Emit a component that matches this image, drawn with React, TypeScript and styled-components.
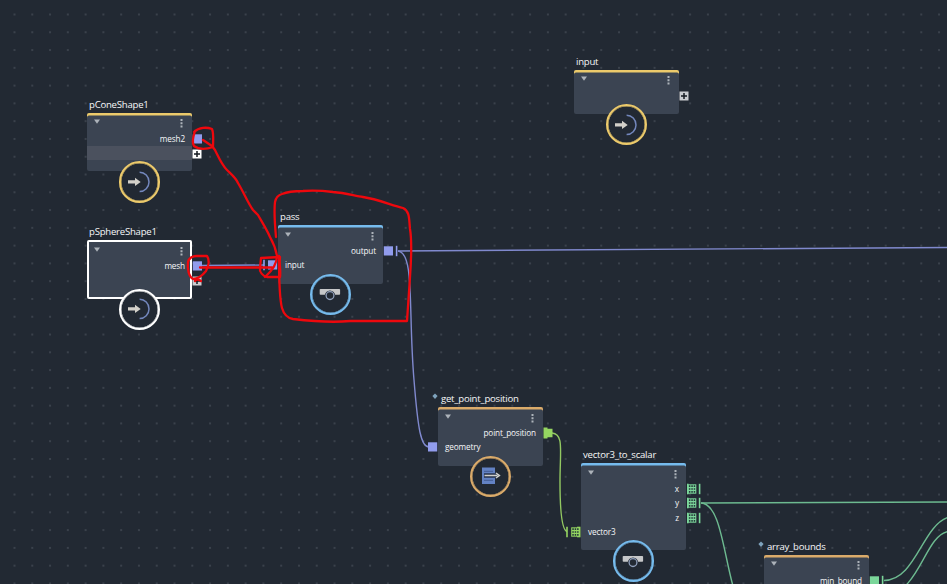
import React from "react";
import styled, { createGlobalStyle } from "styled-components";

const GlobalStyle = createGlobalStyle`
  * { box-sizing: border-box; }
  body { margin: 0; background: #222933; overflow: hidden; }
`;

const PITCH = 17.78;

const Canvas = styled.main`
  position: relative;
  width: 947px;
  height: 584px;
  overflow: hidden;
  background: #222933;
  font-family: "Open Sans", "Noto Sans", sans-serif;
  color: #f6f7f8;
`;

const Layer = styled.svg`
  position: absolute;
  inset: 0;
  width: 947px;
  height: 584px;
  fill: none;
  pointer-events: none;
`;

const NodeBox = styled.section<{ $x: number; $y: number }>`
  position: absolute;
  left: ${(p) => p.$x}px;
  top: ${(p) => p.$y - 16}px;
  width: 105px;
  display: flex;
  flex-direction: column;
`;

const Title = styled.h2<{ $shift: number }>`
  position: relative;
  margin: 0;
  height: 16px;
  padding-left: ${(p) => p.$shift}px;
  font-size: 9.6px;
  font-weight: 400;
  line-height: 16px;
  letter-spacing: -0.24px;
  white-space: nowrap;
`;

const Marker = styled.svg`
  position: absolute;
  left: -6px;
  top: 2px;
  width: 6px;
  height: 8px;
`;

const Card = styled.div<{ $accent: string; $selected?: boolean }>`
  position: relative;
  display: flex;
  flex-direction: column;
  padding-bottom: 11px;
  border-radius: 2px;
  background: #3b4452;
  box-shadow: ${(p) => (p.$selected ? "inset 0 0 0 2px #ffffff" : `inset 0 2.5px 0 ${p.$accent}`)};
`;

const CardHeader = styled.div`
  display: flex;
  justify-content: space-between;
  height: 19px;
  padding: 6.5px 9px 0 7px;
`;

const Row = styled.div<{ $out?: boolean; $band?: boolean }>`
  position: relative;
  display: flex;
  align-items: center;
  justify-content: ${(p) => (p.$out ? "flex-end" : "flex-start")};
  height: 14.3px;
  padding: 0 7px;
  background: ${(p) => (p.$band ? "#4b515e" : "transparent")};
`;

const Label = styled.span`
  font-size: 8.2px;
  line-height: 14px;
  letter-spacing: -0.13px;
  white-space: nowrap;
`;

const Socket = styled.svg<{ $out?: boolean }>`
  position: absolute;
  top: 1px;
  ${(p) => (p.$out ? "left: 105px;" : "right: 105px;")}
  width: 18px;
  height: 12px;
  overflow: visible;
`;

const PlusBox = styled.svg<{ $y: number }>`
  position: absolute;
  left: 105px;
  top: ${(p) => p.$y}px;
  width: 10px;
  height: 10px;
`;

const Badge = styled.div<{ $accent: string }>`
  position: absolute;
  left: 31.5px;
  bottom: -31.5px;
  width: 41.5px;
  height: 41.5px;
  display: flex;
  align-items: center;
  justify-content: center;
  border: 2px solid ${(p) => p.$accent};
  box-shadow: inset 0 0 0 0.5px ${(p) => p.$accent};
  border-radius: 50%;
  background: #222933;
`;

type Kind = "import" | "pass" | "compute";
type SocketKind = "square" | "squareTick" | "gridTick" | "tab";

interface PortDef {
  label: string;
  out?: boolean;
  band?: boolean;
  socket?: SocketKind;
  color?: string;
}

interface NodeDef {
  title: string;
  x: number;
  y: number;
  accent: string;
  kind: Kind;
  ports: PortDef[];
  shift?: number;
  marker?: boolean;
  selected?: boolean;
  plus?: { y: number; fill: string };
}

function SocketIcon({ kind, color, out }: { kind: SocketKind; color: string; out?: boolean }) {
  return (
    <Socket $out={out} viewBox="0 0 18 12">
      {(kind === "square" || kind === "squareTick") && (
        <rect x={out ? 0.8 : 8} y="1.3" width="9.2" height="9.2" fill={color} />
      )}
      {kind === "tab" && <path d="M0.5 0.5h4v1.2h5v8.6h-5v1.2h-4z" fill={color} />}
      {kind === "gridTick" && (
        <g transform={out ? "translate(1 0)" : "translate(17.5 0) scale(-1 1)"}>
          <rect x="0" y="0.7" width={out ? 1.6 : 3.4} height="10.6" fill={color} />
          <rect x="0.5" y="1.3" width="8.8" height="9.4" fill={color} />
          <path
            d="M1.9 3.200h1.500M4.300 3.200h1.500M6.700 3.200h1.500M1.900 6h1.500M4.300 6h1.500M6.700 6h1.500M1.900 8.800h1.500M4.300 8.800h1.500M6.700 8.800h1.500"
            stroke="#24393a"
            strokeWidth="1.700"
          />
        </g>
      )}
      {(kind === "squareTick" || kind === "gridTick") && (
        <path d={out ? "M13.6 0.8v10.4" : "M4 0.8v10.4"} stroke={color} strokeWidth="1.6" />
      )}
    </Socket>
  );
}

function KindIcon({ kind }: { kind: Kind }) {
  if (kind === "import")
    return (
      <svg width="36" height="36" viewBox="0 0 36 36" fill="none">
        <path d="M7 16.200h7v-2.400l5.700 4.100-5.700 4.100v-2.400H7z" fill="#d3d0c9" />
        <path d="M18.600 8.200a9.400 9.700 0 0 1 0 19.400" stroke="#7387bd" strokeWidth="1.500" />
      </svg>
    );
  if (kind === "pass")
    return (
      <svg width="36" height="36" viewBox="0 0 36 36" fill="none">
        <rect x="7.700" y="13" width="20.400" height="5.800" rx="0.800" fill="#c6c7c9" />
        <circle cx="18" cy="19.600" r="5.200" fill="#222933" />
        <circle cx="18" cy="19.600" r="3.900" fill="#222933" stroke="#8f9fbb" strokeWidth="1.300" />
      </svg>
    );
  return (
    <svg width="36" height="36" viewBox="0 0 36 36" fill="none">
      <path d="M10 9.500h13v16.500H10z" fill="#6382c4" />
      <path d="M12 13.300h9M12 22.300h9" stroke="#435c93" strokeWidth="1" />
      <path d="M12 15.200h11v-1.800l5 4.200-5 4.200v-2h-11z" fill="#27334c" />
      <path d="M12.500 17.500h13M24 15l3.400 2.500-3.400 2.500" stroke="#d0d0cc" strokeWidth="1.500" />
    </svg>
  );
}

const YELLOW = "#ecca6b";
const BLUE = "#76bbed";
const TAN = "#dbab6a";
const MESH = "#919ced";
const LIME = "#95d561";
const GREEN = "#7bd69a";

const nodes: NodeDef[] = [
  {
    title: "pConeShape1", x: 87, y: 112.500, accent: YELLOW, kind: "import",
    plus: { y: 36, fill: "#ffffff" },
    ports: [{ label: "mesh2", out: true, socket: "square", color: MESH }, { label: "", band: true }],
  },
  {
    title: "pSphereShape1", x: 87, y: 240, accent: "#ffffff", kind: "import", selected: true,
    plus: { y: 36, fill: "#c9ccd0" },
    ports: [{ label: "mesh", out: true, socket: "square", color: MESH }, { label: "" }],
  },
  {
    title: "pass", x: 278, y: 225, accent: BLUE, kind: "pass",
    ports: [
      { label: "output", out: true, socket: "squareTick", color: MESH },
      { label: "input", socket: "squareTick", color: MESH },
    ],
  },
  {
    title: "input", x: 574, y: 69.500, accent: YELLOW, kind: "import",
    plus: { y: 21.500, fill: "#c9ccd0" }, ports: [{ label: "" }],
  },
  {
    title: "get_point_position", x: 438, y: 407, accent: TAN, kind: "compute", marker: true, shift: 3,
    ports: [
      { label: "point_position", out: true, socket: "tab", color: LIME },
      { label: "geometry", socket: "square", color: MESH },
    ],
  },
  {
    title: "vector3_to_scalar", x: 581, y: 463, accent: BLUE, kind: "pass",
    ports: [
      { label: "x", out: true, socket: "gridTick", color: GREEN },
      { label: "y", out: true, socket: "gridTick", color: GREEN },
      { label: "z", out: true, socket: "gridTick", color: GREEN },
      { label: "vector3", socket: "gridTick", color: LIME },
    ],
  },
  {
    title: "array_bounds", x: 764, y: 554.500, accent: TAN, kind: "compute", marker: true, shift: 3,
    ports: [
      { label: "min_bound", out: true, socket: "squareTick", color: GREEN },
      { label: "" },
    ],
  },
];

function GraphNode({ node }: { node: NodeDef }) {
  return (
    <NodeBox $x={node.x} $y={node.y}>
      <Title $shift={node.shift ?? 2}>
        {node.marker && (
          <Marker viewBox="0 0 6 8">
            <path d="M3 0.500L5.600 3 3 6 0.400 3z" fill="#7ea3bd" />
          </Marker>
        )}
        {node.title}
      </Title>
      <Card $accent={node.accent} $selected={node.selected}>
        <CardHeader>
          <svg width="6" height="5" viewBox="0 0 6 5"><path d="M0 0.500h6L3 4.800z" fill="#adb3ba" /></svg>
          <svg width="3" height="9" viewBox="0 0 3 9">
            <path d="M0.500 0h2v2h-2zM0.500 3.300h2v2h-2zM0.500 6.600h2v2h-2z" fill="#adb3ba" />
          </svg>
        </CardHeader>
        {node.ports.map((p, i) => (
          <Row key={i} $out={p.out} $band={p.band}>
            <Label>{p.label}</Label>
            {p.socket && <SocketIcon kind={p.socket} color={p.color ?? MESH} out={p.out} />}
          </Row>
        ))}
        {node.plus && (
          <PlusBox $y={node.plus.y} viewBox="0 0 10 10">
            <rect x="0.500" y="0.500" width="9" height="9" fill={node.plus.fill} />
            <path d="M5 2v6M2 5h6" stroke="#151a21" strokeWidth="1.500" />
          </PlusBox>
        )}
        <Badge $accent={node.accent}><KindIcon kind={node.kind} /></Badge>
      </Card>
    </NodeBox>
  );
}

const wires = [
  { d: "M398 251L947 247.500", c: "#8089ce" },
  { d: "M398 251C415 253 408 310 414 380C418 430 421 447 429 447", c: "#8089ce" },
  { d: "M202 265.500L264 265", c: "#8089ce" },
  { d: "M552 433C564 434 560 450 560 482C560 513 562 530 567 531.500", c: "#93c962" },
  { d: "M701 503L947 502", c: "#6dba90" },
  { d: "M701 503C720 504 723 550 733 586", c: "#6dba90" },
  { d: "M884 580.500C916 580 922 526 948 517.500", c: "#6dba90" },
  { d: "M884 595C920 594 924 536 948 531.500", c: "#6dba90" },
];

const strokes = [
  "M195 131C193 137 192 143 194 146C198 149 204 150 213 147C213 141 214 134 212 129C207 127 199 127 194 132",
  "M203 140L212 146L215 150C219 158 222 165 227 170C231 174 236 178 238 183C244 193 248 203 253 210L258 215C262 222 267 230 270 237C274 244 276 250 277 256C277 263 273 270 265 277",
  "M276 237C275 226 274 210 275 202C276 197 278 195 282 194C289 191 296 191 303 191C316 190 325 191 333 192C346 193 355 196 363 197C377 199 391 205 403 208C410 211 409 220 410 229C412 241 411 263 410 277L407 321L350 321C330 323 310 321 293 319C287 318 284 315 282 308C279 297 279 275 279 256",
  "M261 258L280 257C279 264 281 271 280 277L267 277C263 276 259 272 260 268Z",
  "M188 262C189 258 193 256 197 256H207C210 260 208 267 206 271C202 276 197 279 193 279C189 277 187 269 188 262",
  "M200 267.500H272",
  "M195 281Q197 278 201 281",
];

export default function App() {
  return (
    <>
      <GlobalStyle />
      <Canvas>
        <Layer viewBox="0 0 947 584">
          <defs>
            <pattern id="dots" x="5.600" y="5.600" width={PITCH} height={PITCH} patternUnits="userSpaceOnUse">
              <circle cx="8.900" cy="8.900" r="0.900" fill="#454c56" />
            </pattern>
          </defs>
          <rect width="947" height="584" fill="url(#dots)" />
          {wires.map((w) => (
            <path key={w.d} d={w.d} stroke={w.c} strokeWidth="1.400" />
          ))}
        </Layer>
        {nodes.map((n) => (
          <GraphNode key={n.title} node={n} />
        ))}
        <Layer viewBox="0 0 947 584" stroke="#ee080d" strokeWidth="2.300" strokeLinecap="round" strokeLinejoin="round">
          {strokes.map((d) => (
            <path key={d} d={d} />
          ))}
        </Layer>
      </Canvas>
    </>
  );
}
